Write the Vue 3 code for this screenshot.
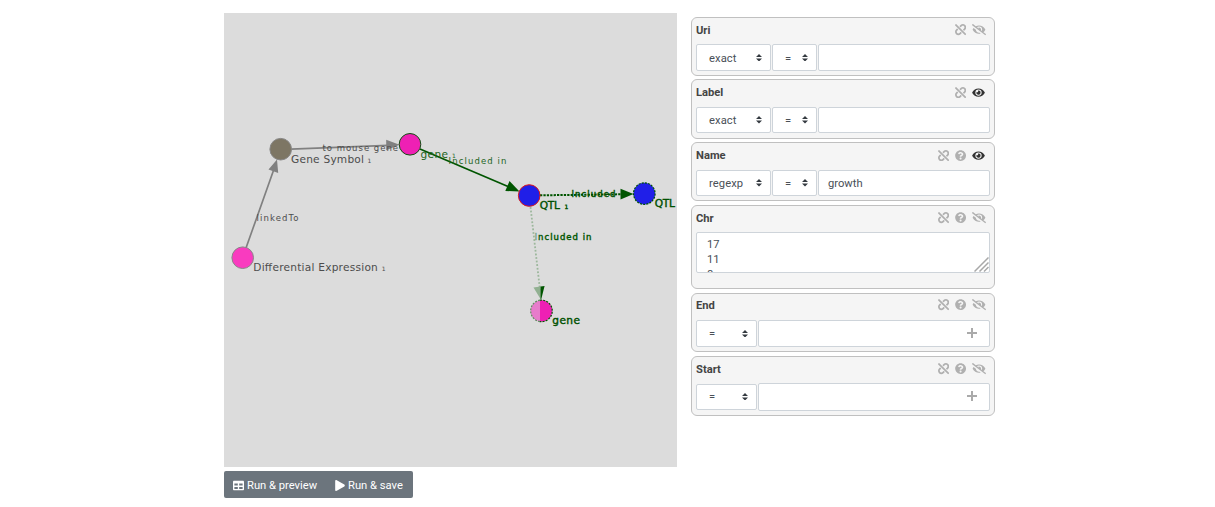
<script setup>
const paths = {
  unlink: {
    box: '0 0 512 512',
    d: 'M304.083 405.907c4.686 4.686 4.686 12.284 0 16.971l-44.674 44.674c-59.263 59.262-155.693 59.266-214.961 0-59.264-59.265-59.264-155.696 0-214.96l44.675-44.675c4.686-4.686 12.284-4.686 16.971 0l39.598 39.598c4.686 4.686 4.686 12.284 0 16.971l-44.675 44.674c-28.072 28.073-28.072 73.75 0 101.823 28.072 28.072 73.75 28.073 101.824 0l44.674-44.674c4.686-4.686 12.284-4.686 16.971 0l39.597 39.598zm-56.568-260.216c4.686 4.686 12.284 4.686 16.971 0l44.674-44.674c28.072-28.075 73.75-28.073 101.824 0 28.072 28.073 28.072 73.75 0 101.823l-44.675 44.674c-4.686 4.686-4.686 12.284 0 16.971l39.598 39.598c4.686 4.686 12.284 4.686 16.971 0l44.675-44.675c59.265-59.265 59.265-155.695 0-214.96-59.266-59.264-155.695-59.264-214.961 0l-44.674 44.674c-4.686 4.686-4.686 12.284 0 16.971l39.597 39.598zm234.828 359.28l22.627-22.627c9.373-9.373 9.373-24.569 0-33.941L63.598 7.029c-9.373-9.373-24.569-9.373-33.941 0L7.029 29.657c-9.373 9.373-9.373 24.569 0 33.941l441.373 441.373c9.373 9.372 24.569 9.372 33.941 0z',
  },
  help: {
    box: '0 0 512 512',
    d: 'M504 256c0 136.997-111.043 248-248 248S8 392.997 8 256C8 119.083 119.043 8 256 8s248 111.083 248 248zM262.655 90c-54.497 0-89.255 22.957-116.549 63.758-3.536 5.286-2.353 12.415 2.715 16.258l34.699 26.31c5.205 3.947 12.621 3.008 16.665-2.122 17.864-22.658 30.113-35.797 57.303-35.797 20.429 0 45.698 13.148 45.698 32.958 0 14.976-12.363 22.667-32.534 33.976C247.128 238.528 216 254.941 216 296v4c0 6.627 5.373 12 12 12h56c6.627 0 12-5.373 12-12v-1.333c0-28.462 83.186-29.647 83.186-106.667 0-58.002-60.165-102-116.531-102zM256 338c-25.365 0-46 20.635-46 46 0 25.364 20.635 46 46 46s46-20.636 46-46c0-25.365-20.635-46-46-46z',
  },
  eye: {
    box: '0 0 576 512',
    d: 'M572.52 241.4C518.29 135.59 410.93 64 288 64S57.68 135.64 3.48 241.41a32.35 32.35 0 0 0 0 29.19C57.71 376.41 165.07 448 288 448s230.32-71.64 284.52-177.41a32.35 32.35 0 0 0 0-29.19zM288 400a144 144 0 1 1 144-144 143.93 143.93 0 0 1-144 144zm0-240a95.31 95.31 0 0 0-25.31 3.79 47.85 47.85 0 0 1-66.9 66.9A95.78 95.78 0 1 0 288 160z',
  },
  hidden: {
    box: '0 0 640 512',
    d: 'M320 400c-75.85 0-137.25-58.71-142.9-133.11L72.2 185.82c-13.79 17.3-26.48 35.59-36.72 55.59a32.35 32.35 0 0 0 0 29.19C89.71 376.41 197.07 448 320 448c26.91 0 52.87-4 77.89-10.46L346 397.39a144.13 144.13 0 0 1-26 2.61zm313.82 58.1l-110.55-85.44a331.25 331.25 0 0 0 81.25-102.07 32.35 32.35 0 0 0 0-29.19C550.29 135.59 442.93 64 320 64a308.15 308.15 0 0 0-147.32 37.7L45.46 3.37A16 16 0 0 0 23 6.18L3.37 31.45A16 16 0 0 0 6.18 53.9l588.36 454.73a16 16 0 0 0 22.46-2.81l19.64-25.27a16 16 0 0 0-2.82-22.45zm-183.72-142l-39.3-30.38A94.75 94.75 0 0 0 416 256a94.76 94.76 0 0 0-121.31-92.21A47.65 47.65 0 0 1 304 192a46.64 46.64 0 0 1-1.54 10l-73.61-56.89A142.31 142.31 0 0 1 320 112a143.92 143.92 0 0 1 144 144c0 21.63-5.29 41.79-13.9 60.11z',
  },
}

const cards = [
  { id: 'uri', title: 'Uri', kind: 'text', mode: 'exact', value: '', icons: ['unlink', 'hidden'] },
  { id: 'label', title: 'Label', kind: 'text', mode: 'exact', value: '', icons: ['unlink', 'eye'] },
  { id: 'name', title: 'Name', kind: 'text', mode: 'regexp', value: 'growth', icons: ['unlink', 'help', 'eye'] },
  { id: 'chr', title: 'Chr', kind: 'list', options: ['17', '11', '8'], icons: ['unlink', 'help', 'hidden'] },
  { id: 'end', title: 'End', kind: 'number', icons: ['unlink', 'help', 'hidden'] },
  { id: 'start', title: 'Start', kind: 'number', icons: ['unlink', 'help', 'hidden'] },
]
</script>

<template>
  <div class="page">
    <main class="left">
      <svg class="graph" width="453" height="454" viewBox="224 13 453 454">
        <defs>
          <linearGradient id="fade" gradientUnits="userSpaceOnUse" x1="534" y1="0" x2="546" y2="0">
            <stop offset="0" stop-color="#005500" stop-opacity=".1" />
            <stop offset=".5" stop-color="#005500" />
          </linearGradient>
        </defs>
        <g class="link">
          <path d="M246 248L274 169M291 149.200L388 145.300" />
          <path class="tip" d="M277 159.500L278.200 173L268.500 169.500ZM399.500 144.800L386.200 139.800L386.200 150.200Z" />
        </g>
        <g class="link green">
          <path d="M420 149L508 186.500" />
          <path class="tip" d="M519.500 191.500L509.500 181L505.300 191Z" />
          <path class="dots" d="M540 195.300L622 194.300" />
          <path class="tip" d="M633.500 194L620.500 188.800L620.500 199.400Z" />
        </g>
        <path class="faint" d="M530.500 207L540 290" />
        <path class="faint-tip" d="M533.500 287.500L540.500 286.500L540.500 299Z" />
        <path class="dark-tip" d="M540.500 286.500L544.600 286L541.300 299L540.500 299Z" />

        <circle cx="280.700" cy="149.200" r="10.800" fill="#7d7664" stroke="#888" />
        <circle cx="242.700" cy="257.700" r="10.800" fill="#f93bbf" stroke="#888" />
        <circle cx="410" cy="144.300" r="10.800" fill="#ee20b4" stroke="#105010" />
        <circle cx="529.200" cy="195.500" r="10.800" fill="#201fe8" stroke="#e01818" />
        <circle class="ring" cx="644.300" cy="193.600" r="10.800" fill="#201fe8" stroke="#005500" />
        <path d="M540 300.200A10.800 10.800 0 0 0 540 321.600Z" fill="#e77ccb" />
        <path d="M540 300.200A10.800 10.800 0 1 1 540 321.600Z" fill="#ee20b4" />
        <path class="ring" d="M540 300.200A10.800 10.800 0 0 0 540 321.600" fill="none" stroke="#5f8a5f" />
        <path class="ring" d="M540 300.200A10.800 10.800 0 1 1 540 321.600" fill="none" stroke="#005500" />

        <g class="node-text">
          <text x="291" y="163" textLength="73">Gene Symbol</text>
          <text class="sub" x="367.500" y="163">1</text>
          <text x="253.300" y="271" textLength="124.500">Differential Expression</text>
          <text class="sub" x="381.800" y="271">1</text>
          <g class="green-text">
            <text x="420.500" y="157.500" textLength="27.500">gene</text>
            <text class="sub" x="452" y="157.500">1</text>
          </g>
          <g class="green-text strong">
            <text x="539.800" y="209" textLength="20">QTL</text>
            <text class="sub" x="564.500" y="209">1</text>
            <text x="654.800" y="206.500" textLength="20">QTL</text>
            <text x="552.300" y="324" textLength="27.700">gene</text>
          </g>
        </g>
        <g class="edge-text">
          <text x="322.500" y="150.800" textLength="75.500">to mouse gene</text>
          <text x="256.500" y="221" textLength="42">linkedTo</text>
          <text class="green-text" x="448.500" y="164" textLength="58">Included in</text>
          <text class="green-text strong" x="571.500" y="197.200" textLength="44">Included</text>
          <text class="faded" x="534.500" y="240" textLength="57">Included in</text>
        </g>
      </svg>
      <div class="actions">
        <button type="button">
          <svg width="11" height="11" viewBox="0 0 512 512"><path fill="currentColor" d="M464 32H48C21.490 32 0 53.490 0 80v352c0 26.510 21.490 48 48 48h416c26.510 0 48-21.490 48-48V80c0-26.510-21.490-48-48-48zM224 416H64v-96h160v96zm0-160H64v-96h160v96zm224 160H288v-96h160v96zm0-160H288v-96h160v96z" /></svg>
          <span>Run &amp; preview</span>
        </button>
        <button type="button">
          <svg width="10" height="11" viewBox="0 0 448 512"><path fill="currentColor" d="M424.400 214.700L72.400 6.600C43.800-10.300 0 6.100 0 47.900V464c0 37.500 40.700 60.100 72.400 41.300l352-208c31.400-18.500 31.500-64.100 0-82.600z" /></svg>
          <span>Run &amp; save</span>
        </button>
      </div>
    </main>

    <aside class="panel">
      <section v-for="c in cards" :key="c.id" class="card" :class="c.id">
        <header>
          <h2>{{ c.title }}</h2>
          <div class="icons">
            <svg v-for="i in c.icons" :key="i" :class="i" :viewBox="paths[i].box">
              <path :d="paths[i].d" fill="currentColor" />
            </svg>
          </div>
        </header>
        <div v-if="c.kind === 'text'" class="fields">
          <div class="box select mode">
            <span>{{ c.mode }}</span>
            <svg viewBox="0 0 4 5"><path d="M2 0L0 2h4zm0 5L0 3h4z" fill="#343a40" /></svg>
          </div>
          <div class="box select sign">
            <span>=</span>
            <svg viewBox="0 0 4 5"><path d="M2 0L0 2h4zm0 5L0 3h4z" fill="#343a40" /></svg>
          </div>
          <div class="box value">{{ c.value }}</div>
        </div>
        <div v-else-if="c.kind === 'list'" class="box list">
          <div v-for="o in c.options" :key="o">{{ o }}</div>
          <svg class="grip" width="15" height="15" viewBox="0 0 15 15"><path d="M.5 14.500L14.500 .5M5.500 14.500L14.500 5.500M10 14.500L14.500 10" /></svg>
        </div>
        <div v-else class="fields">
          <div class="box select op">
            <span>=</span>
            <svg viewBox="0 0 4 5"><path d="M2 0L0 2h4zm0 5L0 3h4z" fill="#343a40" /></svg>
          </div>
          <div class="box value amount">
            <svg width="10" height="10" viewBox="0 0 10 10"><path d="M5 0V10M0 5H10" stroke="#aaa" stroke-width="2" /></svg>
          </div>
        </div>
      </section>
    </aside>
  </div>
</template>

<style>
body { background: #fff; }
</style>

<style scoped>
.page {
  display: flex;
  align-items: flex-start;
  gap: 14px;
  box-sizing: border-box;
  height: 507px;
  padding: 13px 0 0 224px;
  overflow: hidden;
  font-family: Roboto, sans-serif;
  font-size: 11.200px;
  color: #495057;
}
.left { width: 453px; }
.graph { display: block; background: #dcdcdc; }
.link { stroke: #808080; stroke-width: 1.700; fill: none; }
.link.green { stroke: #005500; }
.tip { stroke: none; fill: #808080; }
.green .tip { fill: #005500; }
.link .dots { stroke-width: 2; stroke-dasharray: 2.300 1.100; }
.faint { stroke: #9cb79c; stroke-width: 1.800; stroke-dasharray: 1.800 1.800; }
.faint-tip { fill: #91b091; }
.dark-tip { fill: #005500; }
.ring { stroke-width: 1.200; stroke-dasharray: 2 1.200; }
.node-text { font: 10.600px "DejaVu Sans", sans-serif; fill: #4c4c4c; }
.node-text .sub { font-size: 6px; }
.edge-text { font: 8.500px "DejaVu Sans", sans-serif; fill: #4c4c4c; }
.green-text { fill: #1c641c; }
.strong { fill: #005000; stroke: #005000; stroke-width: .4; }
.faded { fill: url(#fade); stroke: url(#fade); stroke-width: .4; }
.actions {
  display: flex;
  box-sizing: border-box;
  width: 189px;
  height: 27px;
  margin-top: 4px;
  background: #6c757d;
  border-radius: 2px;
}
.actions button {
  display: flex;
  align-items: center;
  gap: 3px;
  padding: 1px 9px 0;
  border: 0;
  background: none;
  color: #fff;
  font: inherit;
  white-space: nowrap;
}
.panel { width: 304px; padding-top: 4px; }
.card {
  box-sizing: border-box;
  height: 59px;
  margin-bottom: 3px;
  padding: 0 4px;
  border: 1px solid #c0c0c0;
  border-radius: 6px;
  background: #f5f5f5;
}
.card.label { height: 60px; }
.card.chr { height: 84px; margin-top: 4px; margin-bottom: 4px; }
.card.end { margin-bottom: 4px; }
.card.start { height: 60px; }
header { display: flex; justify-content: space-between; align-items: center; height: 26px; }
.label header, .name header { height: 27px; }
header h2, header .icons { margin-top: -2px; }
.end header h2, .end .icons { margin-top: -4px; }
h2 { margin: 0; font-size: 11.200px; font-weight: 700; color: #444; }
.icons { display: flex; align-items: center; gap: 6px; margin-right: 5px; color: #b0b0b0; }
.icons svg { width: 11.200px; height: 11.200px; }
.icons .eye { width: 13px; color: #333; }
.icons .hidden { width: 14px; margin-left: -.5px; margin-right: -.5px; }
.fields { display: flex; align-items: center; gap: 1px; height: 27px; }
.box {
  box-sizing: border-box;
  height: 27px;
  border: 1px solid #ced4da;
  border-radius: 2px;
  background: #fff;
}
.label .box, .name .box { height: 26px; }
.label .fields, .name .fields { height: 26px; }
.select { display: flex; align-items: center; justify-content: space-between; padding: 0 8px 0 12px; }
.select svg { width: 6px; height: 7.500px; }
.uri .select span { padding-top: 1px; }
.mode { width: 75px; }
.mode span { letter-spacing: .08px; }
.sign { width: 45px; }
.value { flex: 1; padding-left: 9px; line-height: 25px; }
.op { width: 61px; }
.amount { display: flex; align-items: center; justify-content: flex-end; padding-right: 12px; }
.amount svg { margin-top: -1px; }
.start .op { height: 26px; }
.start .amount { height: 28px; }
.list { position: relative; height: 41px; padding: 4px 10px; overflow: hidden; line-height: 15px; }
.grip { position: absolute; right: 0; bottom: 0; fill: none; stroke: #a8a8a8; stroke-width: 1.500; }
</style>
